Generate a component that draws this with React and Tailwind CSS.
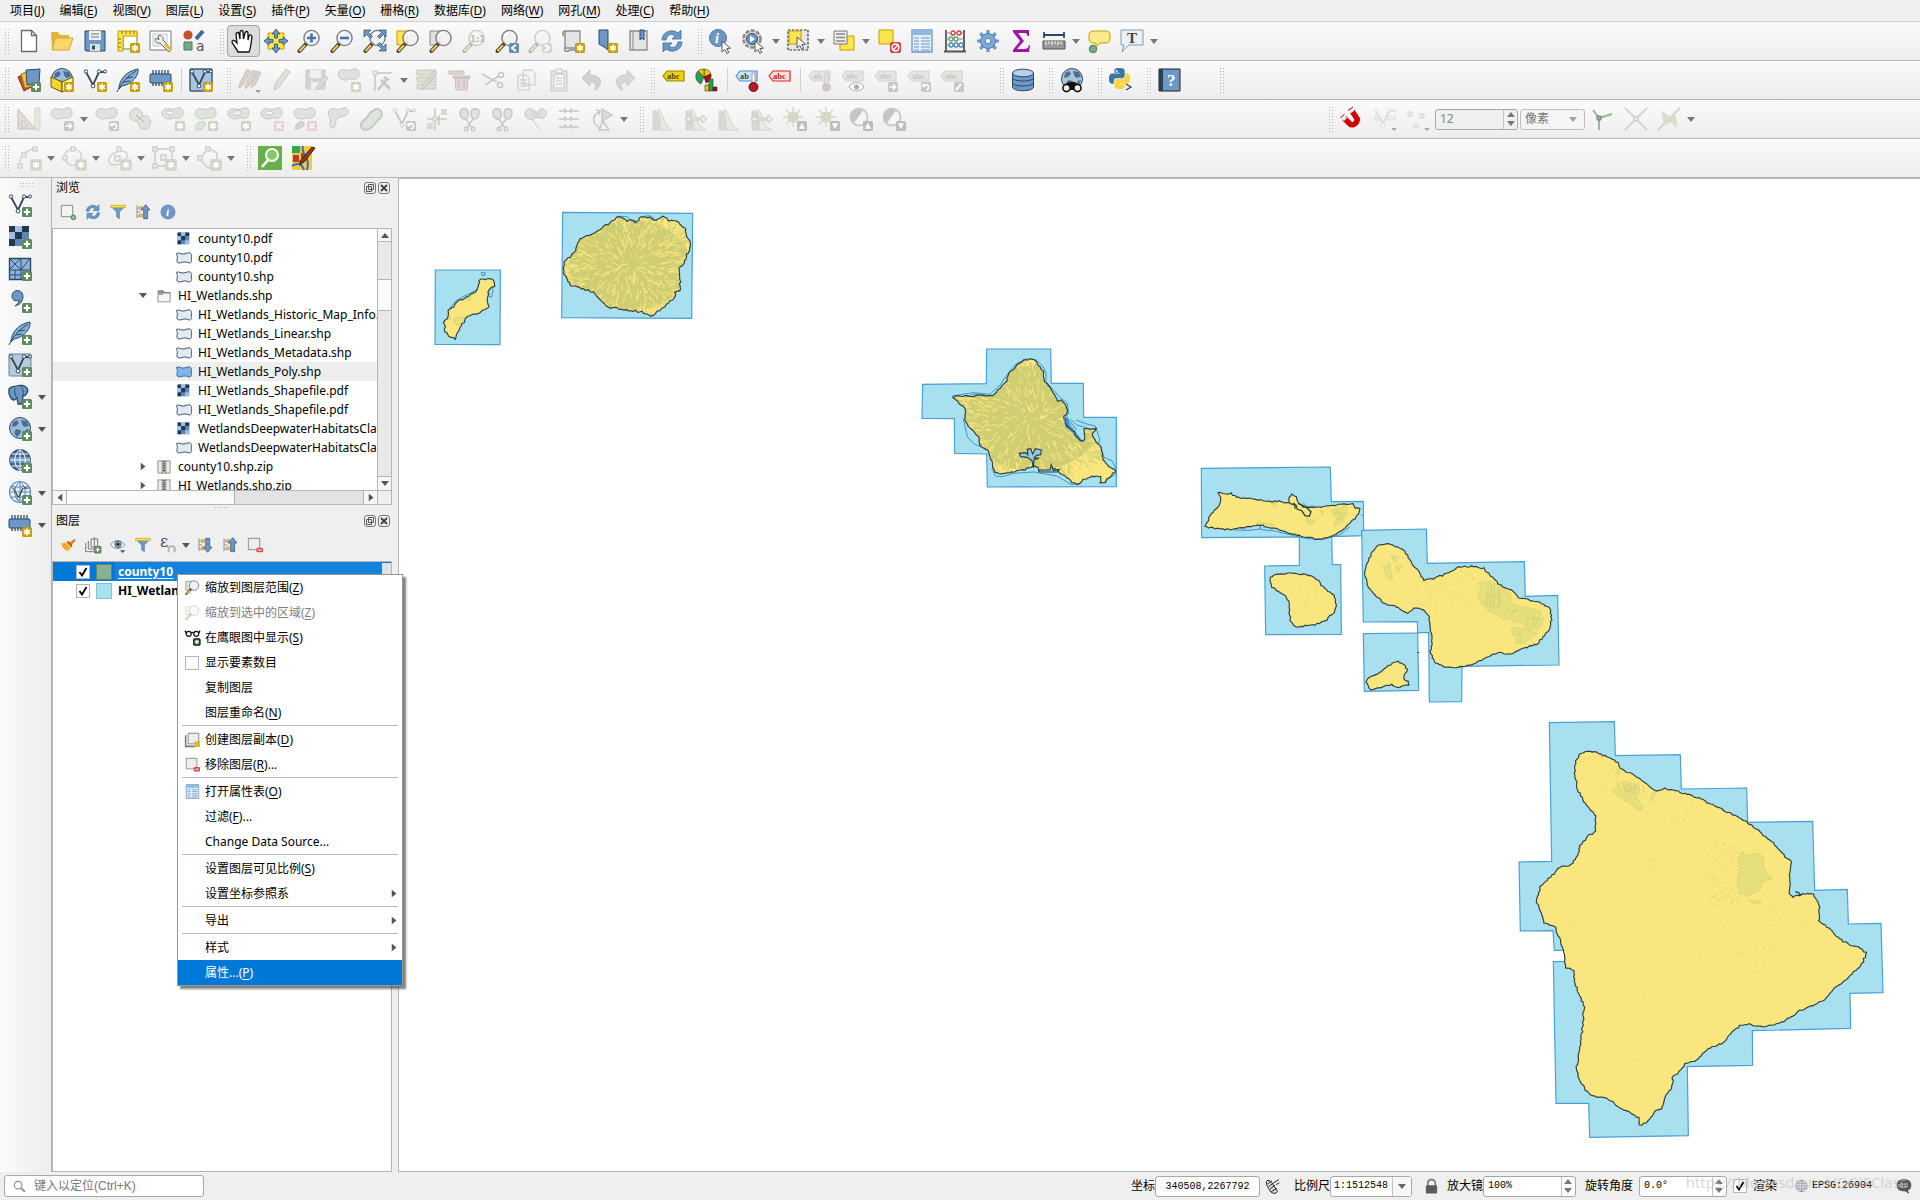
import React, { useState } from "react";

// ===== Icon parts =====
const B = "#6d97c4";
const D = "#2b4a6b";
const Y = "#ffe54c";
const G = "#d3d5d2";
const GD = "#c6c8c5";

const Badge = ({ c = "#c4a000", children }) => (
  <g>
    <rect x="14" y="14" width="10" height="10" rx="1.5" fill={c} />
    <g stroke="#fff" strokeWidth="1.6" fill="none">{children}</g>
  </g>
);
const Star = ({ c }) => <Badge c={c}><path d="M19 15.4v7.2M15.9 17.2l6.2 3.6M22.1 17.2l-6.2 3.6" /></Badge>;
const Plus = () => <Badge c="#5a8c5a"><path strokeWidth="2" d="M19 15.8v6.4M15.8 19h6.4" /></Badge>;
const GStar = () => <Star c="#d0d0c2" />;
const GCross = () => <Badge c="#e3d3d6"><path d="M16.5 16.5l5 5M21.5 16.5l-5 5" /></Badge>;
const GArrow = () => <Badge c="#c6c8c4"><path d="M15.5 19h6M19 16.3l2.7 2.7-2.7 2.7" /></Badge>;
const GTurn = () => <Badge c="#c6c8c4"><path d="M17 17.5a2.6 2.6 0 1 1 2 4.3M16 16v2.4h2.4" /></Badge>;
const GUp = () => <Badge c="#bcc0ba"><path fill="#fff" strokeWidth="0" d="M19 15.8l3 6h-6z" /></Badge>;
const GDown = () => <Badge c="#bcc0ba"><path fill="#fff" strokeWidth="0" d="M19 22.2l3-6h-6z" /></Badge>;

const Lens = ({ soft }) => (
  <g opacity={soft ? 0.35 : 1}>
    <path d="M9.5 14.5L2.5 22" stroke="#333" strokeWidth="4" strokeLinecap="round" />
    <path d="M7.5 16.7L3 21.5" stroke="#f5c84a" strokeWidth="2.2" strokeLinecap="round" />
    <circle cx="14.5" cy="9" r="7.6" fill="#eef0ee" fillOpacity="0.85" stroke="#7b7d79" strokeWidth="1.4" />
    <path d="M9.8 8a5 5 0 0 1 4.5-4.3" stroke="#fff" strokeWidth="1.6" fill="none" />
  </g>
);
const Blob = ({ fill = "#dfe3de", stroke = GD }) => (
  <path d="M1 6c0-4 5-5 8-4s5 0 8-1 6 2 5 6-4 5-7 4-3 1-6 1-8-1-8-6z" fill={fill} stroke={stroke} />
);
const Cursor = () => <path d="M13 12v11l2.8-2.6 2 4 2-1-2-3.8 3.6-.4z" fill="#fff" stroke="#555" strokeWidth="1" />;
const Vee = ({ c = "#34495e" }) => (
  <g stroke={c} fill="none">
    <path d="M3 4l7 13 6-13h5" strokeWidth="1.8" />
    <g fill="#fff" strokeWidth="1"><circle cx="3" cy="3.5" r="1.7" /><circle cx="10" cy="18" r="1.9" /><circle cx="16" cy="3.5" r="1.7" /><circle cx="22" cy="3.5" r="1.5" /></g>
  </g>
);
const Feather = () => (
  <g>
    <path d="M3 21C3 12 10 3 22 1c1 6-5 15-16 17z" fill="#86add6" stroke={D} />
    <path d="M1 24C5 15 12 8 20 3M7 14l7-1M10 10l7-1" stroke={D} fill="none" />
  </g>
);
const Chip = () => (
  <g>
    <path d="M4 2v16M7 2v16M10 2v16M13 2v16M16 2v16M19 2v16" stroke={D} strokeWidth="1.3" />
    <rect x="1" y="6" width="21" height="9" rx="1" fill={B} stroke={D} />
  </g>
);
const Globe = ({ fill = "#9dbde0", line = D }) => (
  <g>
    <circle cx="12" cy="11" r="10.5" fill={fill} stroke={line} />
    <path d="M5 5l4-2 2 3-3 3-4 1zM13 3l6 1 2 5-5 1-2-3zM8 12l5 1-1 4-3 3-3-4zM17 13l4-1-2 5z" fill={line} opacity="0.7" />
  </g>
);
const Grid = ({ c = D }) => (
  <g>
    <circle cx="12" cy="11" r="10.5" fill="#e9f0f8" stroke={c} strokeWidth="1.2" />
    <path d="M1.5 11h21M3 6h18M3 16h18M12 .5v21M12 .5c-7 6-7 15 0 21M12 .5c7 6 7 15 0 21" stroke={c} fill="none" />
  </g>
);
const Label = ({ c = "#edd400", s = "#9c8500", t = "#444", text = "abc" }) => (
  <g>
    <path d="M1 8l4-5h17v10H5z" fill={c} stroke={s} strokeWidth="1.2" />
    <text x="5" y="11" fontSize="8.5" fontWeight="bold" fontFamily="Liberation Serif" fill={t}>{text}</text>
  </g>
);
const Hist = () => (
  <g>
    <path d="M2 23V4h3c3 2 4 9 5 13l3 6z" fill="#d5dbd2" stroke={G} />
    <path d="M7 2c4 2 5 8 7 14l4 5 4 2H9z" fill="#ebe7e4" stroke={G} />
    <path d="M9 22V10" stroke="#e6cfcf" />
  </g>
);
const Sheet = () => <path d="M4 2h15v17H4zM4 2C1 2 1 7 4 7M4 19c-2 4 3 4 5 2h10v-2" fill="#e4e4e4" stroke="#8a8a8a" strokeWidth="1.3" />;
const Scissors = () => (
  <g stroke={GD} fill="none" strokeWidth="1.4">
    <path d="M8 12l6 9M15 12l-6 9" /><circle cx="8" cy="22" r="1.8" /><circle cx="15" cy="22" r="1.8" />
    <path d="M2 6c0-5 7-6 8-1s-1 8-4 7-4-3-4-6zM13 6c0-5 8-6 8-1s-1 7-4 7-4-3-4-6z" fill="#dfe3de" />
  </g>
);
const ArrowsUp = ({ down }) => (
  <g>
    <path d="M3 2v19M3 6h5M3 12h5M3 18h5" stroke="#8c8c8c" strokeWidth="1.4" />
    <path d="M7 4h4v4H7zM7 15h4v4H7z" fill="#f6c344" stroke="#d48a1c" />
    <path transform={down ? "rotate(180 16 12)" : ""} d="M16 1l6.5 8H19v13h-6V9H9.5z" fill={B} stroke={D} />
  </g>
);
const Sync = () => (
  <g fill={B} stroke="#3d6ea5" strokeWidth="0.8">
    <path d="M2 11C2 3 12-1 18 4l3-3v9h-9l3-3c-4-3-8-1-9 4z" />
    <path d="M22 13c0 8-10 12-16 7l-3 3v-9h9l-3 3c4 3 8 1 9-4z" />
  </g>
);
const Checker = () => (
  <g>
    <path d="M1 1h20v20H1z" fill="#5d87b8" />
    <path d="M1 1h6v6H1zM7 7h7v7H7zM1 14h6v7H1zM14 1h7v6h-7z" fill="#23364f" />
    <path d="M7 1h7v6H7zM14 14h7v7h-7zM1 7h6v7H1z" fill="#9fc0e4" />
  </g>
);
const Funnel = () => <g><path d="M1 3h22l-9 9v10l-4-3v-7z" fill={B} stroke="#4d76a5" /><path d="M1 2h22v3.5H1z" fill={Y} stroke="#c4a000" strokeWidth="0.8" /></g>;
const Table = () => (
  <g>
    <path d="M2 1h20v22H2z" fill="#e4eff9" stroke={B} strokeWidth="1.3" /><path d="M2 1h20v5H2z" fill="#90b8e0" />
    <path d="M4 9h5M4 12h5M4 15h5M4 18h5M4 21h5M11 9h9M11 12h9M11 15h9M11 18h9M11 21h9" stroke={B} strokeWidth="1.2" />
  </g>
);
const pythonHalf =
  "M14.25.18l.9.2.73.26.59.3.45.32.34.34.25.34.16.33.1.3.04.26.02.2-.01.13V8.5l-.05.63-.13.55-.21.46-.26.38-.3.31-.33.25-.35.19-.35.14-.33.1-.3.07-.26.04-.21.02H8.77l-.69.05-.59.14-.5.22-.41.27-.33.32-.27.35-.2.36-.15.37-.1.35-.07.32-.04.27-.02.21v3.06H3.17l-.21-.03-.28-.07-.32-.12-.35-.18-.36-.26-.36-.36-.35-.46-.32-.59-.28-.73-.21-.88-.14-1.05-.05-1.23.06-1.22.16-1.04.24-.87.32-.71.36-.57.4-.44.42-.33.42-.24.4-.16.36-.1.32-.05.24-.01h.16l.06.01h8.16v-.83H6.18l-.01-2.75-.02-.37.05-.34.11-.31.17-.28.25-.26.31-.23.38-.2.44-.18.51-.15.58-.12.64-.1.71-.06.77-.04.84-.02 1.27.05z";

const VECTOR = "M1 5c3-2 7 2 11 1s8-3 10-1 1 4 1 7 1 5-1 7-6-2-10-1-7 2-9 1-2-4-1-7-2-5-1-7z";

// ===== Icons, all on a 24x24 grid =====
const icons = {
  newFile: <path d="M4.5 1.5h10l5 5v16h-15zM14.5 1.5v5h5" fill="#fff" stroke="#6b6b6b" strokeWidth="1.3" />,
  open: <g><path d="M1 3h7l2 3h9v15H2z" fill="#e3b533" /><path d="M5 9h18l-4 12H2z" fill="#fdd76c" stroke="#d6a728" /></g>,
  save: <g><path d="M2 2h20v20H3l-1-1z" fill={B} stroke={D} /><path d="M6 2h12v9H6z" fill="#eee" /><path d="M8 5h8M8 8h8" stroke="#777" /><path d="M7 15h10v7H7z" fill="#dfe5ec" /><path d="M9 16.5h3v4H9z" fill={D} /></g>,
  layout: <g><path d="M7 3h14v17H7z" fill="#fff" stroke="#777" /><path d="M2 2h19v5H7v15H2z" fill={Y} stroke="#c4a000" /><path d="M6 2v3M10 2v3M14 2v3M18 2v3M2 10h3M2 14h3M2 18h3" stroke="#8a7300" /><Star /></g>,
  tool: <g><path d="M1 2h21v19H1z" fill="#fff" stroke="#777" /><path d="M4 5h14v12H4z" fill="#eef3f8" stroke="#c3ccd6" /><path d="M9 7c3-2 6 2 5 4l8 9-2 3-9-9c-4 1-6-3-4-5l3 2z" fill="#f0f0f0" stroke="#666" /><path d="M16 15l6 6" stroke="#e7bb3a" strokeWidth="3" /></g>,
  style: <g><circle cx="6" cy="6" r="4.6" fill="#c5502d" /><path d="M14 10l7-8" stroke="#3d6c9c" strokeWidth="4" /><path d="M2 13h8v8H2z" fill="#76a888" stroke="#4c7b5d" /><text x="14" y="22" fontSize="14" fontFamily="DejaVu Sans" fill="#555">a</text></g>,
  hand: <path d="M7 23c-1-3-5-7-6-10 0-2 2-2 3-1l2 2-1-9c0-2 3-2 3 0l1 5V3c0-2 3-2 3 0l.5 7L14 4c0-2 3-2 3 0v7l1-4c1-2 3-1 3 1-1 5-1 11-3 15z" fill="#fff" stroke="#111" strokeWidth="1.3" />,
  pan: <g><path d="M4 4h16v16H4z" fill={Y} stroke="#c4a000" /><path d="M12 0l4 5h-2.5v4h-3V5H8zM12 24l4-5h-2.5v-4h-3v4H8zM0 12l5-4v2.5h4v3H5V16zM24 12l-5-4v2.5h-4v3h4V16z" fill={B} stroke={D} strokeWidth="0.8" /></g>,
  zoomIn: <g><Lens /><path d="M14.5 4.5v9M10 9h9" stroke="#3f75b5" strokeWidth="2.6" /></g>,
  zoomOut: <g><Lens /><path d="M10 9h9" stroke="#3f75b5" strokeWidth="2.6" /></g>,
  zoomFull: <g><Lens /><path d="M1 1h7L5.5 3.5l4 4-2 2-4-4L1 8zM23 1h-7l2.5 2.5-4 4 2 2 4-4L23 8zM23 22h-7l2.5-2.5-4-4 2-2 4 4L23 15z" fill={B} stroke={D} strokeWidth="0.7" /></g>,
  zoomSel: <g><path d="M1 2h10v14H1z" fill={Y} stroke="#c4a000" /><Lens /></g>,
  zoomLayer: <g><path d="M1 2h10v14H1z" fill="#e0e0e0" stroke="#8a8a8a" /><Lens /></g>,
  zoomLayerOff: <g opacity="0.35"><path d="M1 2h10v14H1z" fill="#e0e0e0" stroke="#8a8a8a" /><Lens /></g>,
  zoomNative: <g><Lens soft /><text x="8" y="12.5" fontSize="8.5" fontWeight="bold" fontFamily="DejaVu Sans" fill="#bbb">1:1</text></g>,
  zoomLast: <g><Lens /><Badge c="#5f8cbd"><path strokeWidth="2" d="M21 15.8L17 19l4 3.2" /></Badge></g>,
  zoomNext: <g><Lens soft /><Badge c="#d3d7db"><path strokeWidth="2" d="M17 15.8l4 3.2-4 3.2" /></Badge></g>,
  newMap: <g><Sheet /><Star /></g>,
  bookmarkNew: <g><path d="M5 1h9v20l-4-3-5-3z" fill={B} stroke={D} /><Star /></g>,
  bookmarks: <g><path d="M3 2h17v19H3z" fill="#e4e4e4" stroke="#8a8a8a" strokeWidth="1.3" /><path d="M6 2v19" stroke="#8a8a8a" /><path d="M13 1h4v10l-2-2-2 2z" fill={B} stroke={D} /></g>,
  refresh: <Sync />,
  identify: <g><circle cx="9" cy="9" r="8.5" fill={B} stroke="#4a77aa" /><text x="6" y="14" fontSize="14" fontStyle="italic" fontWeight="bold" fontFamily="Liberation Serif" fill="#fff">i</text><Cursor /></g>,
  action: <g><circle cx="10" cy="10" r="8.5" fill="#ddd" stroke="#888" strokeWidth="2.5" strokeDasharray="4 1.5" /><circle cx="10" cy="10" r="5.5" fill={B} stroke={D} /><path d="M8 6.5l5 3.5-5 3.5z" fill="#fff" /><Cursor /></g>,
  select: <g><path d="M1 1h20v20H1z" fill="#e6e6e6" stroke="#333" strokeDasharray="2.5 1.5" strokeWidth="1.2" /><path d="M2 2h12v13H2z" fill={Y} stroke="#c4a000" /><path transform="translate(-3 -4)" d="M13 12v11l2.8-2.6 2 4 2-1-2-3.8 3.6-.4z" fill="#fff" stroke="#555" /></g>,
  selectForm: <g><path d="M8 7h14v14H8z" fill={Y} stroke="#c4a000" /><path d="M2 2h13v13H2z" fill="#eee" stroke="#777" /><path d="M4 5h9M4 8.5h9M4 12h9" stroke="#888" strokeWidth="1.5" /></g>,
  deselect: <g><path d="M2 1h14v14H2z" fill={Y} stroke="#c4a000" /><rect x="13" y="13" width="11" height="11" rx="2" fill="#d6424a" /><circle cx="18.5" cy="18.5" r="3.5" fill="none" stroke="#fff" strokeWidth="1.4" /><path d="M16 21l5-5" stroke="#fff" strokeWidth="1.4" /></g>,
  table: <Table />,
  calc: <g><path d="M3 1v21M21 1v21M1 22.5h22" stroke="#555" strokeWidth="1.8" /><path d="M3 4h18M3 10h18M3 16h18" stroke="#888" /><g fill="#fff" strokeWidth="1.3"><g stroke="#d43b3b"><circle cx="10" cy="4" r="2" /><circle cx="16" cy="4" r="2" /></g><g stroke="#59a869"><circle cx="8" cy="10" r="2" /><circle cx="13" cy="10" r="2" /></g><g stroke="#4a86b8"><circle cx="8" cy="16" r="2" /><circle cx="13" cy="16" r="2" /><circle cx="18" cy="16" r="2" /></g></g></g>,
  gear: <g><path d="M12 1v22M1 12h22M4.2 4.2l15.6 15.6M19.8 4.2L4.2 19.8" stroke={B} strokeWidth="3.2" /><circle cx="12" cy="12" r="7.5" fill="#7fa8d6" stroke="#4f7fb5" /><circle cx="12" cy="12" r="2.8" fill="#f4f4f4" stroke="#4f7fb5" /></g>,
  sigma: <path d="M4 1h16v6h-1.5c-.5-2.5-1.5-3-4-3H9l6 8-7 8h7c3 0 4-1 5-4h1l-1 7H4v-2l7-9-7-9z" fill="#a3149f" />,
  measure: <g><path d="M2 6h20M2 3v6M22 3v6" stroke={D} strokeWidth="1.8" /><path d="M1 12h22v8H1z" fill="#999" stroke="#555" /><path d="M4 12v4M7 12v3M10 12v4M13 12v3M16 12v4M19 12v3" stroke="#fff" /></g>,
  tips: <g><circle cx="6" cy="20" r="3.8" fill="#76a888" stroke="#4c7b5d" /><path d="M6 2h13c3 0 4 2 4 4v4c0 3-2 4-4 4h-6l-4 4v-4H6c-3 0-4-2-4-4V6c0-2 1-4 4-4z" fill="#fbe98a" stroke="#c4a000" /></g>,
  annot: <g><path d="M1 1h22v15H9l-7 7 2-7H1z" fill="#eaf0f4" stroke="#8b9aa6" /><text x="7" y="14" fontSize="15" fontWeight="bold" fontFamily="Liberation Serif" fill="#444">T</text></g>,

  dataSource: <g><path d="M1 9l10-5 5 14-9 5z" fill="#c9492e" stroke="#8a2f1c" /><path d="M4 6l11-4 3 15-10 3z" fill="#f2c431" stroke="#a88313" /><path d="M9 2l14-1-1 14-12 2z" fill={B} stroke={D} /><Plus /></g>,
  geopackage: <g><Globe /><path d="M1 9l11 5v10L1 19z" fill="#f2d330" stroke="#6e5a00" /><path d="M12 14l11-5v10l-11 5z" fill="#fff07a" stroke="#6e5a00" /><Star /></g>,
  newShape: <g><Vee /><Star /></g>,
  newSpatialite: <g><Feather /><Star /></g>,
  newMemory: <g><Chip /><Star /></g>,
  newVirtual: <g><rect x="1" y="1" width="22" height="22" rx="1" fill="#a9c4df" stroke="#415a75" strokeWidth="1.5" /><Vee /><Star /></g>,
  pencils: <g fill="#d9d0cc" stroke={GD}><path d="M1 20l1-5L9 1l4 2-8 14zM7 21l1-5 7-14 4 2-8 14z" /><path d="M13 20l1-5 5-12 4 2-6 12z" /><path d="M17 22h6l-3 3z" fill="#999" stroke="none" /></g>,
  pencil: <path d="M3 22l1-6L15 1l4 3L8 19z" fill="#e4e0d3" stroke={GD} />,
  saveEdits: <g><path d="M2 2h19v19H2z" fill="#d5d5d8" stroke={GD} /><path d="M6 2h11v8H6zM7 14h9v7H7z" fill="#f0f0f0" /><path d="M12 22l1-4 8-10 3 2-8 10z" fill="#e6d9d2" stroke={GD} /></g>,
  addPoly: <g><Blob /><GStar /></g>,
  vertex: <g stroke={GD} fill="none"><path d="M5 5v18M5 5h17" strokeWidth="1.5" /><path d="M3 3h4v4H3z" fill="#eee" /><path d="M8 22l9-11M11 12l9 9M14 9l5 3" strokeWidth="2.5" /></g>,
  attrs: <g><path d="M2 2h19v5H2zM2 9h19v5H2zM2 16h19v5H2z" fill="#e1e0cd" stroke={GD} /><path d="M6 22l2-5L19 3l3 2-11 14z" fill="#ded6d2" stroke={GD} /></g>,
  trash: <g fill="#e2d5d5" stroke="#cbbcbc"><path d="M1 3h15v3H1zM5 8h17v2H5zM7 10h13l-1 12H8z" /><path d="M11 12v8M16 12v8" /></g>,
  cut: <g stroke={GD} fill="none" strokeWidth="1.5"><path d="M1 6l15 8M4 17L18 8" /><circle cx="20" cy="7" r="2.5" /><circle cx="19" cy="17" r="2.5" /></g>,
  copy: <g fill="#f3f3f3" stroke={GD}><path d="M9 2h9l3 3v12H9zM4 7h8l3 3v12H4z" /><path d="M6 12h7M6 15h7M6 18h7" /></g>,
  paste: <g fill="#e6e6e6" stroke={GD}><path d="M4 3h16v20H4z" /><path d="M7 6h10v14H7zM9 1h6v4H9z" fill="#f5f5f5" /><path d="M9 10h6M9 13h6M9 16h6" /></g>,
  undo: <path d="M2 10l8-8v5c8 0 12 4 10 9-1 4-4 6-6 6 3-4 3-8-4-8v4z" fill="#d9cfca" stroke={GD} />,
  redo: <path d="M22 10l-8-8v5C6 7 2 11 4 16c1 4 4 6 6 6-3-4-3-8 4-8v4z" fill="#d5dad2" stroke={GD} />,
  label: <Label />,
  diagram: <g stroke="#333" strokeWidth="0.6"><path d="M9 9V1A8 8 0 0 1 16 6z" fill="#f3c400" /><path d="M9 9L3 3a8 8 0 0 0 3 13z" fill="#1ea54a" /><path d="M9 9L3 3a8 8 0 0 1 6-2z" fill="#f3c400" /><path d="M9 9l7-3a8 8 0 0 1-5 9z" fill="#b40000" /><path d="M10 17h4v6h-4z" fill="#f3c400" /><path d="M14 11h4v12h-4z" fill="#1ea54a" /><path d="M18 19h4v4h-4z" fill="#b40000" /></g>,
  labelPin: <g><Label c="#cfe2f8" s="#4a90e2" text="ab" /><path d="M17 5h3v11h-3z" fill="#fff" stroke="#999" /><circle cx="18.5" cy="19" r="4.5" fill="#b01c24" stroke="#6d0d12" /></g>,
  labelRed: <Label c="#ffdede" s="#f02020" t="#c01818" />,
  gl1: <g><Label c="#e5e5df" s={G} t="#c5c5c5" text="ab" /><circle cx="18.5" cy="19" r="4.5" fill="#d3c5c7" /><path d="M17 5h3v11h-3z" fill="#eee" stroke={GD} /></g>,
  gl2: <g><Label c="#e5e5df" s={G} t="#c5c5c5" /><path d="M8 19c4-6 11-6 15 0-4 5-11 5-15 0z" fill="#fff" stroke="#aaa" /><circle cx="15.5" cy="19" r="2.5" fill="#aaa" /></g>,
  gl3: <g><Label c="#e5e5df" s={G} t="#c5c5c5" /><GArrow /></g>,
  gl4: <g><Label c="#e5e5df" s={G} t="#c5c5c5" /><GTurn /></g>,
  gl5: <g><Label c="#e5e5df" s={G} t="#c5c5c5" /><Badge c="#c6c8c4"><path d="M16 22l5-6" strokeWidth="2" /></Badge></g>,
  db: <g stroke={D} fill={B}><path d="M1.5 5v14c0 5 21 5 21 0V5z" /><ellipse cx="12" cy="5" rx="10.5" ry="3.8" fill="#b9d0e8" /><path d="M1.5 10c0 4 21 4 21 0M1.5 15c0 4 21 4 21 0" fill="none" /></g>,
  metasearch: <g><Globe fill="#aac4de" /><path d="M4 22c0-4 3-8 6-8h4c3 0 6 4 6 8z" fill="#111" /><circle cx="6.5" cy="20" r="3.6" fill="#eee" stroke="#111" strokeWidth="1.6" /><circle cx="17.5" cy="20" r="3.6" fill="#eee" stroke="#111" strokeWidth="1.6" /></g>,
  python: <g><g transform="scale(.88)"><path d={pythonHalf} fill="#3a77a8" /><path d={pythonHalf} transform="rotate(180 12 12)" fill="#ffd445" /><circle cx="8.7" cy="3.4" r="1.1" fill="#fff" /></g><path d="M17 16l5 3-5 3" fill="none" stroke="#444" strokeWidth="1.3" /></g>,
  help: <g><path d="M1 1h21v22H1z" fill={B} stroke="#222" /><path d="M1 1h4v22H1z" fill="#2c3e50" /><text x="9" y="18" fontSize="17" fontFamily="Liberation Serif" fontWeight="bold" fill="#fff">?</text></g>,

  cad: <g><path d="M1 2l17 20H1zM5 13l5 6H5z" fill="#e3dada" fillRule="evenodd" stroke="#c9bfbf" /><path d="M18 1h5v22h-5z" fill="#e9e7da" stroke={G} /></g>,
  move: <g><Blob /><GArrow /></g>,
  rotate: <g><Blob /><GTurn /></g>,
  simplify: <g fill="#dfe3de" stroke={GD}><circle cx="8" cy="8" r="6.5" /><path d="M9 14l5-5h6l3 6-3 7h-7z" /><path d="M8 8l8 7" fill="none" stroke="#aaa" /></g>,
  addRing: <g><Blob /><ellipse cx="9" cy="6" rx="4" ry="2" fill="#f5f5f5" stroke={GD} /><GStar /></g>,
  addPart: <g><Blob /><path d="M2 20c0-5 8-7 9-4s-2 7-9 7z" fill="#dfe3de" stroke={GD} /><GStar /></g>,
  fillRing: <g><Blob /><ellipse cx="10" cy="6" rx="5" ry="2.5" fill="#e8ebe7" stroke={GD} /><GStar /></g>,
  delRing: <g><Blob /><ellipse cx="9" cy="6" rx="4" ry="2" fill="#f5f5f5" stroke={GD} /><GCross /></g>,
  delPart: <g><Blob /><path d="M2 22c1-6 5-9 8-7s0 7-8 7z" fill="#d3d5d2" stroke={GD} /><GCross /></g>,
  reshape: <path d="M2 6c0-4 5-5 8-4s5 0 8-1 5 2 4 5-4 3-8 4-4 4-5 8-5 4-5 0 1-6-2-12z" fill="#dfe3de" stroke={GD} />,
  offset: <path d="M2 18c0-5 5-5 7-9s8-9 12-6 1 8-2 10-4 7-9 9-8 0-8-4z" fill="#dfe3de" stroke={GD} strokeWidth="2" />,
  offsetCurve: <g><Vee c={GD} /><GTurn /></g>,
  splitFeat: <g stroke={GD} fill="none"><path d="M10 1v22M2 12h20M14 8v10" strokeWidth="1.4" /><path d="M8 10h4v4H8z" fill="#eee" /><path d="M16 2h6v6h-6z" fill="#d9d9c8" stroke="none" /><path d="M2 16h6v6H2z" fill="#e3d3d6" stroke="none" /></g>,
  scissors: <Scissors />,
  merge: <g stroke={GD} fill="#dfe3de"><path d="M1 7c0-6 8-7 10-2s3-5 8-3 4 8 0 9-6-2-8 0-10 2-10-4z" /><path d="M9 4v6M12 4v6M15 4v6M8 12l8 11" fill="none" /></g>,
  align: <path d="M2 4h20M2 12h20M2 20h20M8 1v5M14 1v5M8 9v5M14 9v5M8 17v5M14 17v5" stroke={GD} strokeWidth="1.5" />,
  rotPoint: <g fill="none" stroke={GD} strokeWidth="1.4"><path d="M9 20C2 17 2 8 9 5M6 3l4 1-1 4" /><path d="M12 2l10 6-10 6z" fill="#d9ddd8" /><path d="M13 14l6 9H9z" /></g>,
  hist: <Hist />,
  histArrow: <g><Hist /><path d="M1 12l5-4v3h12V8l5 4-5 4v-3H6v3z" fill="#eee" stroke={GD} /></g>,
  sunUp: <g><path d="M10 0v20M0 10h20M3 3l14 14M17 3L3 17" stroke="#dcdccf" strokeWidth="1.8" /><circle cx="10" cy="10" r="5.5" fill="#d7d7c6" /><GUp /></g>,
  sunDown: <g><path d="M10 0v20M0 10h20M3 3l14 14M17 3L3 17" stroke="#dcdccf" strokeWidth="1.8" /><circle cx="10" cy="10" r="5.5" fill="#d7d7c6" /><GDown /></g>,
  conUp: <g><circle cx="10" cy="10" r="8.5" fill="#f5f5f5" stroke="#ccc" strokeWidth="2" /><path d="M14 3.5A7.5 7.5 0 0 0 5 16z" fill="#c5c5c5" /><GUp /></g>,
  conDown: <g><circle cx="10" cy="10" r="8.5" fill="#f5f5f5" stroke="#ccc" strokeWidth="2" /><path d="M14 3.5A7.5 7.5 0 0 0 5 16z" fill="#c5c5c5" /><GDown /></g>,
  magnet: <g fill="none"><path d="M4 11l6 6c3 3 10-3 6-7l-4-6" stroke="#cf0000" strokeWidth="5.5" /><path d="M2 10l4 4M10 3l4 4" stroke="#cf0000" strokeWidth="0" /><path d="M2.5 9.5l3 3M10.500 2l2 3" stroke="#f7eaea" strokeWidth="4.5" /><path d="M.5 11l4-4M8 3.500L13 0" stroke="#8a0a0a" /></g>,
  snapV: <g><Vee c="#dcdedc" /><path d="M2 9h4v4H2zM14 9h8v4h-8z" fill="#eee" stroke="#dcdedc" /><path d="M18 21h6l-3 3z" fill="#aaa" /></g>,
  snapPts: <g fill="#eceeec" stroke={G}><path d="M2 5h4v4H2zM14 7h4v4h-4zM8 17h4v4H8z" /><path d="M18 21h6l-3 3z" fill="#aaa" stroke="none" /></g>,
  topo: <g><path d="M2 3l6 8 13-4M8 11v12" stroke="#8cc08f" strokeWidth="2" fill="none" /><path d="M6 9h4v4H6z" fill="#aaa" stroke="#777" /></g>,
  inter: <g stroke={G} fill="#eee" strokeWidth="1.8"><path d="M1 1l22 22M23 1L1 23" /><path d="M10 10h4v4h-4z" /></g>,
  selfSnap: <g><path d="M1 23L23 1" stroke={G} strokeWidth="2" /><path d="M4 4l8 5 7-1 1 13-6-6-7 3z" fill="#dddbcb" /></g>,

  arc: <g fill="none" stroke={G} strokeWidth="1.6"><path d="M2 20C3 9 8 4 18 3" /><path d="M1 18h4v4H1zM16 1h4v4h-4zM5 7h4v4H5z" fill="#f0f0f0" /><GStar /></g>,
  circ: <g fill="none" stroke={G} strokeWidth="1.6"><circle cx="11" cy="11" r="8.5" /><path d="M9 1h4v4H9zM1 10h4v4H1z" fill="#f0f0f0" /><GStar /></g>,
  ellip: <g fill="none" stroke={G} strokeWidth="1.6"><ellipse cx="11" cy="12" rx="10" ry="6" transform="rotate(-25 11 12)" /><path d="M8 10h5v5H8zM10 1h4v4h-4z" fill="#f0f0f0" /><GStar /></g>,
  rect: <g fill="none" stroke={G} strokeWidth="1.8"><path d="M3 3h17v17H3z" /><path d="M1 1h4v4H1zM18 1h4v4h-4zM1 18h4v4H1zM9 9h5v5H9z" fill="#f0f0f0" /><GStar /></g>,
  poly: <g fill="none" stroke={G} strokeWidth="1.8"><path d="M11 2l9 5v10l-9 5-8-9z" /><path d="M9 1h4v4H9zM1 10h4v4H1z" fill="#f0f0f0" /><GStar /></g>,
  osmSearch: <g><path d="M0 0h24v24H0z" fill="#68b04a" /><circle cx="14" cy="9" r="6" fill="#86c96a" stroke="#fff" strokeWidth="2" /><path d="M10 14l-6 7" stroke="#fff" strokeWidth="2.5" /></g>,
  osmEdit: <g><path d="M1 0h20v24H1z" fill="#f6ca3c" /><path d="M1 0h8v7H1z" fill="#2fa84f" /><path d="M2 9h6v7H2zM10 7h4v6h-4z" fill="#b93d2c" /><path d="M12 0c-3 8 8 10 4 24M1 20c6-4 10-2 12 4" stroke="#2d6fd2" strokeWidth="2" fill="none" /><path d="M9 15L21 1l3 1-10 13-5 4z" fill="#8f3b14" stroke="#4a1c07" /></g>,

  addVector: <g><Vee /><Plus /></g>,
  addRaster: <g><Checker /><Plus /></g>,
  addMesh: <g><path d="M1.5 1.5h21v21h-21z" fill="#8fb2d9" stroke={D} strokeWidth="1.4" /><path d="M1 13h22M13 1v22M1 1l12 12M13 1L1 13M22 1l-9 12M7 13v10M1 18h12" stroke={D} /><Plus /></g>,
  addCsv: <g><path d="M4 7c0-7 11-8 11 1-1 6-4 8-8 9 2-2 4-3 4-6-4 2-7 0-7-4z" fill={B} stroke={D} /><Plus /></g>,
  addSpatialite: <g><Feather /><Plus /></g>,
  addVirtual: <g><rect x="1" y="1" width="22" height="22" rx="1" fill="#b5c9dc" stroke="#6b8299" /><Vee /><Plus /></g>,
  addPostgis: <g><path d="M1 4c3-4 6-2 8-3s8-1 10 2-1 8-4 8l-1 8h-4l-1-6-3 2C3 15 0 9 1 4z" fill={B} stroke={D} strokeWidth="1.3" /><path d="M7 3c-1 4 0 7 2 10M13 2c3 4 3 7 1 9" fill="none" stroke={D} /><Plus /></g>,
  addWms: <g><Globe /><Plus /></g>,
  addWcs: <g><circle cx="12" cy="11" r="10.5" fill="#3d668f" stroke={D} /><path d="M2 8h20v6H2z" fill={B} /><path d="M1.5 11h21M4 5h16M4 17h16M12 .5v21M12 .5c-7 6-7 15 0 21M12 .5c7 6 7 15 0 21" stroke="#fff" fill="none" /><Plus /></g>,
  addWfs: <g><Grid c="#5f8dbd" /><g transform="translate(3 4) scale(.75)"><Vee /></g><Plus /></g>,

  addBox: <g><path d="M2 2h17v17H2z" fill="#f4f4f4" stroke="#888" strokeWidth="1.4" /><circle cx="20" cy="20" r="3.5" fill="#8fc48f" stroke="#4c7b5d" strokeWidth="1.5" /></g>,
  filter: <Funnel />,
  collapse: <ArrowsUp />,
  expand: <ArrowsUp down />,
  info: <g><circle cx="12" cy="12" r="10.5" fill={B} stroke="#4a77aa" /><text x="9" y="18" fontSize="17" fontStyle="italic" fontWeight="bold" fontFamily="Liberation Serif" fill="#fff">i</text></g>,
  brush: <g><path d="M14 9l7-6 3 2-7 7z" fill="#c98042" /><path d="M1 9c4 0 8-1 12-2l5 6c-1 4-4 7-7 8-4-2-8-7-10-12z" fill="#f0c23c" /><path d="M13 6l6 7-2 2-7-8z" fill="#d4492f" /><path d="M3 12l7 8M6 10l7 8" stroke="#dd7a35" strokeWidth="1.5" /></g>,
  group: <g fill="none" stroke="#777" strokeWidth="1.5"><path d="M1 9v13h12M5 6v12h12M9 3h10v12H9z" /><path d="M14 0v15" /><Plus /></g>,
  eye: <g><path d="M1 12C6 3 17 3 22 12c-5 7-16 7-21 0z" fill="#fff" stroke="#888" strokeWidth="1.5" /><circle cx="12" cy="11" r="5" fill={B} stroke="#555" /><circle cx="12" cy="11" r="2" fill="#222" /><path d="M15 20h8l-4 4z" fill="#555" /></g>,
  epsilon: <g><text x="0" y="15" fontSize="24" fontFamily="DejaVu Serif" fill="#5f3c70">ε</text><path d="M13 23v-7c0-3 9-3 9 0v7" fill="none" stroke="#b5b5b5" strokeWidth="3" /></g>,
  removeBox: <g><path d="M2 2h17v17H2z" fill="#eee" stroke="#888" strokeWidth="1.4" /><rect x="14" y="16" width="10" height="7" rx="2" fill="#e0474c" /><path d="M16 19.5h6" stroke="#fff" strokeWidth="1.5" /></g>,
  duplicate: <g><path d="M1 5v18h16" fill="none" stroke="#777" strokeWidth="2.5" /><path d="M5 2h17v17H5z" fill="#eee" stroke="#777" strokeWidth="1.4" /><path d="M15 15h9v9h-9z" fill="#d8b92c" /></g>,
  glasses: <g fill="none" stroke="#111" strokeWidth="2"><circle cx="6" cy="6" r="4" /><circle cx="18" cy="6" r="4" /><path d="M10 5c1-1 3-1 4 0M2 5L0 1M22 5l2-4" /><Plus /></g>,
  raster: <Checker />,
  vector: <path d={VECTOR} fill="#e3e9f1" stroke="#42566e" strokeWidth="1.5" />,
  vectorOn: <path d={VECTOR} fill="#7fb6e3" stroke="#3b6f9f" strokeWidth="1.5" />,
  folder: <g><path d="M1 2h10l2 3h10v3H1z" fill="#8a8a86" /><path d="M1.500 9.500H9l2-2.500h11.500v15h-21z" fill="#f4f4f3" stroke="#8a8a86" strokeWidth="1.5" /></g>,
  zip: <g><path d="M1.5 1.5h21v21h-21z" fill="#e9e9e6" stroke="#8a8a86" strokeWidth="1.5" /><path d="M9 1v22M15 1v22" stroke="#555" /><path d="M12 2v13" stroke="#444" strokeWidth="4" strokeDasharray="2 1.5" /><circle cx="12" cy="18" r="2" fill="#555" /></g>,
  search: <g fill="none" stroke="#8c8c8c"><circle cx="9.5" cy="9.5" r="7" strokeWidth="2.2" /><path d="M15 15l7 7" strokeWidth="3.5" /></g>,
  pen: <g stroke="#222" fill="none" strokeWidth="1.6"><path d="M3 3c5-3 8 3 11 8l6 9c-2 4-9 4-12-1S0 6 3 3z" fill="#ddd" /><path d="M4 8l7-5M6 12l8-6M8 16l8-6M10 20l9-5M14 6l8-5M18 9l5-3" /></g>,
  lock: <g><path d="M6 11V7c0-8 12-8 12 0v4" fill="none" stroke="#777" strokeWidth="2.5" /><rect x="3" y="10" width="18" height="13" rx="2" fill="#5b5b5b" /></g>,
  crs: <Grid c="#777" />,
  bubble: <g><path d="M12 2c7 0 11 3 11 9 0 4-2 7-5 8l2 5-7-4C5 20 1 17 1 11c0-6 4-9 11-9z" fill="#55585d" /><path d="M6 9h4v4H6zM12 9h6M12 13h6" stroke="#ccc" strokeWidth="1.5" /></g>,
};

const Icon = ({ name, className = "size-6" }) => (
  <svg viewBox="0 0 24 24" className={`shrink-0 overflow-visible ${className}`} fill="none" aria-hidden="true">
    {icons[name]}
  </svg>
);

const Caret = ({ className = "text-[#555]" }) => (
  <svg viewBox="0 0 8 5" className={`h-[5px] w-2 shrink-0 ${className}`} aria-hidden="true">
    <path d="M0 0h8L4 5z" fill="currentColor" />
  </svg>
);

// ===== Toolbars =====
// "|" is a drag handle, "-" a separator, a trailing "v" a drop-down arrow
const row1 = ["newFile", "open", "save", "layout", "tool", "style", "|", "hand", "pan", "zoomIn", "zoomOut", "zoomFull", "zoomSel", "zoomLayer", "zoomNative", "zoomLast", "zoomNext", "newMap", "bookmarkNew", "bookmarks", "refresh", "|", "identify", "action v", "select v", "selectForm v", "deselect", "table", "calc", "gear", "sigma", "measure v", "tips", "annot v"];
const row2 = ["dataSource", "geopackage", "newShape", "newSpatialite", "newMemory", "-", "newVirtual", "|", "pencils", "pencil", "saveEdits", "addPoly", "vertex v", "attrs", "trash", "cut", "copy", "paste", "undo", "redo", "|", "label", "diagram", "-", "labelPin", "labelRed", "-", "gl1", "gl2", "gl3", "gl4", "gl5"];
const row2b = ["db", "|", "metasearch", "|", "python", "|", "help"];
const row3 = ["cad", "move v", "rotate", "simplify", "addRing", "addPart", "fillRing", "delRing", "delPart", "reshape", "offset", "offsetCurve", "splitFeat", "scissors", "scissors", "merge", "align", "rotPoint v", "|", "hist", "histArrow", "hist", "histArrow", "sunUp", "sunDown", "conUp", "conDown"];
const row4 = ["arc v", "circ v", "ellip v", "rect v", "poly v", "|", "osmSearch", "osmEdit"];

const Handle = () => (
  <span className="ml-2 mr-[3px] h-[26px] w-[5px] shrink-0 bg-[radial-gradient(#b5b5b5_40%,transparent_45%)] bg-[size:3px_3px]" />
);

function ToolItem({ item }) {
  if (item === "|") return <Handle />;
  if (item === "-") return <span className="mx-[3px] h-6 w-px shrink-0 bg-[#d0d0d0]" />;
  const [name, arrow] = item.split(" ");
  return (
    <button
      type="button"
      aria-label={name}
      className={`flex h-8 shrink-0 items-center rounded-sm pl-1 ${arrow ? "w-[45px] gap-[6px]" : "w-[33px]"} ${name === "hand" ? "border border-[#a5a5a5] bg-[#dcdcdc] pl-[3px]" : ""}`}
    >
      <Icon name={name} />
      {arrow && <Caret className="text-[#777]" />}
    </button>
  );
}

const Tools = ({ items }) => items.map((item, i) => <ToolItem key={i} item={item} />);

const Toolbar = ({ children }) => (
  <div className="flex h-[39px] shrink-0 items-center border-b border-[#b5b5b5] bg-linear-to-b from-[#fbfbfb] to-[#ededed]">
    <span className="mx-1 h-[26px] w-[5px] shrink-0 bg-[radial-gradient(#b5b5b5_40%,transparent_45%)] bg-[size:3px_3px]" />
    {children}
  </div>
);

// ===== Small controls =====
function Mnemonic({ text }) {
  const m = text.match(/^(.*\()(\w)(\).*)$/);
  if (!m) return text;
  return <>{m[1]}<u className="underline-offset-2">{m[2]}</u>{m[3]}</>;
}

function Check({ checked, onChange, label, className = "size-[14px]" }) {
  return (
    <span className="grid shrink-0 place-items-center">
      <input type="checkbox" aria-label={label} checked={checked} onChange={onChange} className={`col-start-1 row-start-1 appearance-none border border-[#b5b5b5] bg-white ${className}`} />
      {checked && (
        <svg viewBox="0 0 10 10" className="pointer-events-none col-start-1 row-start-1 size-[10px]" aria-hidden="true">
          <path d="M1.5 5L4 8.5 8.5 1" fill="none" stroke="#000" strokeWidth="1.8" />
        </svg>
      )}
    </span>
  );
}

function Spin({ label, value, className, textClass }) {
  return (
    <span className={`flex h-[21px] shrink-0 rounded-[3px] border border-[#a8a8a8] ${className}`}>
      <input aria-label={label} defaultValue={value} className={`min-w-0 flex-1 bg-transparent pl-1 outline-none ${textClass}`} />
      <span className="flex w-[14px] flex-col items-center justify-center gap-1 border-l border-[#c4c4c4] text-[#777]">
        <button type="button" aria-label={`${label} +`} className="rotate-180"><Caret className="block" /></button>
        <button type="button" aria-label={`${label} -`}><Caret className="block" /></button>
      </span>
    </span>
  );
}

// ===== Side docks =====
const sideTools = ["addVector", "addRaster", "addMesh", "addCsv", "addSpatialite", "addVirtual", "addPostgis v", "addWms v", "addWcs", "addWfs v", "newMemory v"];

const tree = [
  { icon: "raster", text: "county10.pdf" },
  { icon: "vector", text: "county10.pdf" },
  { icon: "vector", text: "county10.shp" },
  { icon: "folder", text: "HI_Wetlands.shp", parent: "open" },
  { icon: "vector", text: "HI_Wetlands_Historic_Map_Info.shp" },
  { icon: "vector", text: "HI_Wetlands_Linear.shp" },
  { icon: "vector", text: "HI_Wetlands_Metadata.shp" },
  { icon: "vectorOn", text: "HI_Wetlands_Poly.shp", hover: true },
  { icon: "raster", text: "HI_Wetlands_Shapefile.pdf" },
  { icon: "vector", text: "HI_Wetlands_Shapefile.pdf" },
  { icon: "raster", text: "WetlandsDeepwaterHabitatsClassification.pdf" },
  { icon: "vector", text: "WetlandsDeepwaterHabitatsClassification.pdf" },
  { icon: "zip", text: "county10.shp.zip", parent: "closed" },
  { icon: "zip", text: "HI_Wetlands.shp.zip", parent: "closed" },
];

function DockTitle({ title }) {
  const cls = "flex size-3 items-center justify-center rounded-[3px] border border-[#777]";
  return (
    <div className="flex h-5 items-center gap-[2px] pl-1 pr-[2px]">
      <h2 className="flex-1">{title}</h2>
      <button type="button" aria-label="float" className={cls}>
        <svg viewBox="0 0 8 8" className="size-2"><path d="M2.5 .5h5v5h-5zM.5 2.5h5v5h-5z" fill="none" stroke="#555" /></svg>
      </button>
      <button type="button" aria-label="close" className={cls}>
        <svg viewBox="0 0 8 8" className="size-2"><path d="M1 1l6 6M7 1L1 7" stroke="#444" strokeWidth="2" /></svg>
      </button>
    </div>
  );
}

function DockTools({ items }) {
  return (
    <div className="mb-[2px] flex h-7 items-center pl-2">
      {items.map((item, i) => {
        const [name, arrow] = item.split(" ");
        return (
          <button key={i} type="button" aria-label={name} className={`flex items-center ${arrow ? "w-[37px] gap-[6px]" : "w-[25px]"}`}>
            <Icon name={name} className="size-4" />
            {arrow && <Caret />}
          </button>
        );
      })}
    </div>
  );
}

function BrowserTree() {
  return (
    <div className="grid h-[277px] grid-cols-[1fr_14px] grid-rows-[1fr_14px] border border-[#b5b5b5] bg-white">
      <ul className="overflow-hidden">
        {tree.map((n, i) => (
          <li key={i} className={`flex h-[19px] items-center whitespace-nowrap ${n.parent ? "pl-[86px]" : "pl-[123px]"} ${n.hover ? "bg-[#eee]" : ""}`}>
            {n.parent && <Caret className={n.parent === "open" ? "mr-[10px] text-[#555]" : "mr-[10px] -rotate-90 text-[#555]"} />}
            <Icon name={n.icon} className={n.parent ? "mr-[7px] size-[14px]" : n.icon === "raster" ? "ml-[1px] mr-[7px] size-[14px]" : "mr-[6px] size-4"} />
            <span>{n.text}</span>
          </li>
        ))}
      </ul>
      <div className="flex flex-col items-center border-l border-[#b5b5b5] bg-[#e9e9e9]">
        <button type="button" aria-label="up" className="grid h-[13px] w-full place-items-center border-b border-[#b5b5b5] bg-[#f7f7f7]"><Caret className="rotate-180 text-[#555]" /></button>
        <span className="mt-[37px] h-8 w-full border-y border-[#b5b5b5] bg-[#fafafa]" />
        <button type="button" aria-label="down" className="mt-auto grid h-[14px] w-full place-items-center border-t border-[#b5b5b5] bg-[#f7f7f7]"><Caret className="text-[#555]" /></button>
      </div>
      <div className="flex border-t border-[#b5b5b5] bg-[#e3e3e3]">
        <button type="button" aria-label="left" className="grid w-[14px] shrink-0 place-items-center border-r border-[#b5b5b5] bg-[#f7f7f7]"><Caret className="rotate-90 text-[#555]" /></button>
        <span className="w-[168px] border-r border-[#b5b5b5] bg-[#fafafa]" />
        <button type="button" aria-label="right" className="ml-auto grid w-[14px] shrink-0 place-items-center border-l border-[#b5b5b5] bg-[#f7f7f7]"><Caret className="-rotate-90 text-[#555]" /></button>
      </div>
      <div className="border-l border-t border-[#b5b5b5] bg-[#efefef]" />
    </div>
  );
}

function LayerTree() {
  const [visible, setVisible] = useState({ county10: true, HI_Wetlands_Poly: true });
  const toggle = (id) => setVisible((prev) => ({ ...prev, [id]: !prev[id] }));
  return (
    <ul className="flex-1 border border-[#b5b5b5] bg-white font-bold">
      <li className="flex h-[19px] items-center bg-[#0078d7] pl-[23px] text-white">
        <Check label="county10" checked={visible.county10} onChange={() => toggle("county10")} />
        <span className="ml-[6px] size-4 border border-[#5f8568] bg-[#89b196]" />
        <span className="ml-[3px] flex h-full flex-1 items-center bg-[#1583dc] pl-[3px] underline underline-offset-2">county10</span>
        <span className="mb-1 h-[13px] w-[9px] bg-[#e2e2e2]" />
      </li>
      <li className="flex h-[19px] items-center pl-[23px]">
        <Check label="HI_Wetlands_Poly" checked={visible.HI_Wetlands_Poly} onChange={() => toggle("HI_Wetlands_Poly")} />
        <span className="ml-[6px] size-4 border border-[#7fc3dd] bg-[#a8e0ef]" />
        <span className="ml-[6px]">HI_Wetlands_Poly</span>
      </li>
    </ul>
  );
}

// ===== Context menu =====
const contextMenu = [
  { text: "缩放到图层范围(Z)", icon: "zoomLayer" },
  { text: "缩放到选中的区域(Z)", icon: "zoomLayerOff", disabled: true },
  { text: "在鹰眼图中显示(S)", icon: "glasses" },
  { text: "显示要素数目", check: true },
  { text: "复制图层" },
  { text: "图层重命名(N)" },
  null,
  { text: "创建图层副本(D)", icon: "duplicate" },
  { text: "移除图层(R)...", icon: "removeBox" },
  null,
  { text: "打开属性表(O)", icon: "table" },
  { text: "过滤(F)..." },
  { text: "Change Data Source..." },
  null,
  { text: "设置图层可见比例(S)" },
  { text: "设置坐标参照系", sub: true },
  null,
  { text: "导出", sub: true },
  null,
  { text: "样式", sub: true },
  { text: "属性...(P)", active: true },
];

function ContextMenu() {
  return (
    <div role="menu" className="absolute left-[177px] top-[574px] w-[226px] border border-[#979797] bg-white shadow-[3px_3px_2px_rgba(0,0,0,0.5)]">
      {contextMenu.map((item, i) =>
        item === null ? (
          <div key={i} className="mx-1 mb-px h-px bg-[#bdbdbd]" />
        ) : (
          <button
            key={i}
            type="button"
            role="menuitem"
            disabled={item.disabled}
            className={`flex h-[25px] w-full items-center pl-[7px] text-left ${item.active ? "bg-[#0078d7] text-white" : ""} ${item.disabled ? "text-[#808080]" : ""}`}
          >
            <span className="mr-[6px] flex w-[14px] shrink-0 justify-center">
              {item.icon && <Icon name={item.icon} className="size-[15px]" />}
              {item.check && <span className="size-[14px] border border-[#b5b5b5]" />}
            </span>
            <span className="flex-1"><Mnemonic text={item.text} /></span>
            {item.sub && <Caret className="mr-1 -rotate-90 text-[#555]" />}
          </button>
        )
      )}
    </div>
  );
}

// ===== Map =====
// Coordinates are thirds of a map pixel, relative to each sheet's origin
const sheets = [
  {
    x: 420, y: 190,
    tiles: ["46,240 241,240 240,464 45,463", "428,67 818,70 815,385 425,383"],
    coasts: [
      "178,272 190,266 203,268 215,268 225,278 226,288 215,290 207,300 202,320 203,338 207,350 195,358 175,370 150,374 138,384 128,402 115,425 106,447 95,440 86,442 76,425 72,398 83,385 85,362 100,350 120,330 150,317 170,305 175,290",
      "593,82 610,84 622,92 640,90 645,100 655,90 662,82 690,82 708,92 722,86 728,78 745,92 770,95 785,105 797,118 803,145 812,160 810,180 800,195 793,220 778,235 780,270 782,302 762,308 768,320 745,340 720,362 694,377 665,365 625,362 590,355 578,350 572,357 550,340 522,306 490,298 453,285 440,268 430,250 432,214 450,200 465,185 470,160 480,146 500,137 525,130 548,112 570,98",
    ],
    streams: { coast: 1, cx: 630, cy: 225, rx: 215, ry: 160 },
    reefs: ["184,248 196,248 195,256 186,256 184,248", "216,292 219,305 214,322 206,318 208,306", "85,360 108,332 145,312 174,298", "596,79 620,80 640,96 652,100", "664,80 690,77 706,90"],
    patches: ["105,385 135,380 130,398 115,408 100,395", "85,380 92,380 92,388 85,388", "144,320 155,320 152,332 143,330"],
  },
  {
    x: 910, y: 340,
    tiles: ["230,27 422,27 424,130 520,130 521,232 619,232 619,440 232,441 230,342 134,340 133,236 36,235 38,133 229,131"],
    coasts: [
      "126,170 180,168 225,166 248,165 258,155 268,145 290,122 298,100 320,78 340,62 358,57 375,60 390,82 400,95 405,125 420,140 435,165 442,182 455,182 465,195 473,215 462,228 466,248 475,262 490,270 500,290 515,302 525,295 522,278 520,265 540,268 560,263 555,275 548,280 550,295 570,315 575,335 578,360 595,378 619,393 600,410 580,430 572,428 574,410 545,410 520,420 505,432 485,428 470,412 450,400 435,388 428,385 422,393 388,392 386,386 372,378 366,384 310,395 265,402 255,395 248,375 240,350 232,330 210,315 205,290 185,268 166,248 165,205 145,185",
    ],
    streams: { coast: 0, cx: 370, cy: 235, rx: 240, ry: 185 },
    lakes: ["370,384 366,362 352,352 332,350 328,340 346,338 354,344 352,328 362,326 368,342 376,326 394,330 392,344 380,346 372,354 388,354 372,360", "386,390 420,390 424,374 430,392 448,388 442,396 388,396"],
    reefs: ["126,168 190,158 240,163 254,150 270,136 290,106 318,72 350,55", "376,58 398,78 408,98 408,125 430,150 450,172 472,190 476,220 466,230 474,236 500,270", "470,236 485,262 502,285 518,305", "482,238 500,255 525,262", "498,240 530,252 556,258 570,300 564,310", "572,318 582,352 606,362 618,385 618,402 584,424", "160,236 172,290 190,310 214,322", "245,385 256,408 278,410 310,400 372,396 440,408 484,434 512,430", "168,172 190,162 225,164"],
    deep: ["466,230 474,232 480,262 502,284 516,304 508,302 488,278 466,260"],
  },
  {
    x: 1190, y: 460,
    tiles: [
      "34,25 421,21 424,125 520,124 521,227 425,230 427,314 452,314 454,523 227,524 224,318 328,316 328,231 35,233",
      "515,211 709,207 712,310 1003,305 1006,409 1103,406 1107,615 816,619 815,725 718,726 716,518 683,518 682,485 520,486",
      "520,521 683,519 686,691 523,694",
    ],
    coasts: [
      "84,98 108,102 125,100 138,112 180,116 240,124 268,125 298,130 297,115 307,101 320,110 326,130 340,140 352,145 380,140 415,140 440,134 490,133 495,142 511,148 505,160 485,185 460,208 440,222 415,232 380,238 340,230 300,220 260,206 210,196 170,202 120,208 90,208 45,200 60,165 90,135 92,110",
      "240,355 258,343 300,339 360,345 380,358 400,380 430,405 440,432 432,458 410,480 375,495 318,500 302,485 297,460 298,430 285,405 260,392 243,380",
      "527,665 545,648 570,638 595,618 622,604 640,612 652,628 645,645 640,658 655,662 655,675 640,678 620,682 605,672 580,680 555,686 540,688",
      "595,252 568,256 550,272 535,300 525,340 532,375 560,410 585,432 620,440 655,460 672,445 700,447 715,465 720,500 727,545 722,575 733,605 755,618 785,623 845,615 880,598 920,578 965,582 1000,565 1040,552 1065,525 1082,500 1085,465 1078,445 1060,432 1020,420 985,412 965,390 938,382 910,355 880,325 845,318 805,322 770,342 730,355 702,360 685,335 660,300 640,268 610,256",
    ],
    reefs: ["132,210 180,211 210,207 211,198 212,209 250,212 300,224 350,236 400,238 450,224 480,200", "340,128 350,140 372,138", "514,166 519,166"],
    coastLines: ["298,130 318,135 322,148 335,152 345,167 358,169 363,155 350,143 326,130", "312,128 316,146", "682,578 687,578"],
    patches: ["425,150 470,138 472,165 445,195 430,200 440,175", "195,190 215,186 255,195 240,200", "245,128 262,126 255,140", "350,175 375,180 370,195 355,190", "393,150 402,152 398,165", "865,370 885,362 940,380 965,410 962,430 1000,440 1050,452 1062,480 1045,508 1010,512 1000,490 940,478 905,455 880,440 862,410 872,392", "968,500 1000,505 1040,520 1020,535 1000,552 975,550 980,530 965,520", "605,282 625,290 618,305 608,300", "580,320 600,310 608,360 590,350", "615,320 635,318 625,340"],
    veins: ["895,380 888,440", "905,372 900,450", "915,380 910,448", "925,385 930,450", "935,390 922,440", "880,400 900,412 920,408 940,430", "878,425 900,430 930,448", "965,455 985,450 1000,462", "980,445 960,470", "1015,470 1010,490 1020,505", "1030,460 1032,480 1025,505", "1010,480 1030,474 1055,478", "1045,470 1035,500", "985,510 995,550", "435,160 465,160", "440,150 450,165 460,190", "436,180 460,170"],
    dots: [{ cx: 770, cy: 390, rx: 80, ry: 65, n: 80 }, { cx: 690, cy: 400, rx: 30, ry: 60, n: 25 }, { cx: 355, cy: 420, rx: 30, ry: 40, n: 16 }],
  },
  {
    x: 1510, y: 710,
    tiles: ["118,38 313,35 316,137 511,134 514,237 710,234 713,337 908,334 914,541 1012,538 1015,642 1113,640 1119,848 1020,850 1022,955 727,962 728,1066 532,1070 535,1277 239,1282 236,1180 138,1180 130,755 165,754 165,721 133,721 129,662 31,663 27,456 125,454"],
    coasts: [
      "232,122 210,130 196,155 194,190 203,240 225,280 258,318 257,362 235,378 210,405 205,430 185,465 150,472 120,500 90,532 80,575 90,600 103,638 135,652 150,690 160,720 165,772 192,780 192,815 205,845 222,890 218,950 210,1010 200,1070 208,1110 230,1145 255,1158 295,1167 330,1192 360,1205 385,1225 390,1247 410,1238 438,1200 455,1198 465,1160 487,1135 488,1105 525,1062 565,1048 595,1015 640,998 660,970 690,948 715,942 765,952 820,935 865,905 940,873 975,835 1030,790 1060,755 1068,727 1050,715 1000,695 955,655 928,632 928,590 912,553 880,552 850,562 840,550 840,490 843,455 820,435 790,400 750,365 700,330 640,300 560,262 510,247 465,235 440,242 402,218 370,195 330,175 325,160 300,143 260,128",
    ],
    coastLines: ["856,545 866,548 870,556 878,552"],
    patches: ["686,440 698,422 704,438 745,430 762,442 760,470 772,490 788,504 755,515 748,540 720,557 690,550 680,520 688,490", "335,213 385,222 390,245 378,260 400,290 388,303 350,275 310,245 325,212 328,235 345,245", "720,570 752,574 750,580 722,577", "420,278 426,250 438,242 434,260", "325,172 328,196 322,192"],
    veins: ["345,222 380,240", "340,235 375,250", "350,245 385,232", "360,222 362,252", "345,228 350,248", "400,225 402,250", "375,222 372,250"],
    dots: [{ cx: 640, cy: 490, rx: 45, ry: 90, n: 80 }, { cx: 650, cy: 570, rx: 60, ry: 18, n: 40 }, { cx: 500, cy: 310, rx: 50, ry: 40, n: 22 }, { cx: 740, cy: 760, rx: 70, ry: 50, n: 26 }, { cx: 240, cy: 145, rx: 35, ry: 12, n: 14 }, { cx: 290, cy: 210, rx: 30, ry: 35, n: 14 }, { cx: 430, cy: 455, rx: 14, ry: 18, n: 10 }, { cx: 215, cy: 635, rx: 30, ry: 18, n: 10 }, { cx: 850, cy: 620, rx: 80, ry: 30, n: 16 }, { cx: 500, cy: 850, rx: 240, ry: 220, n: 16 }],
  },
];

function makeRandom(seed) {
  let s = seed * 7919;
  return () => {
    s = (s * 16807) % 2147483647;
    return s / 2147483647;
  };
}

// Breaks every segment into short jittered steps so the shoreline looks surveyed
function roughen(points, seed) {
  const rnd = makeRandom(seed);
  const pts = points.split(" ").map((p) => p.split(",").map(Number));
  const out = [];
  pts.forEach(([x1, y1], i) => {
    const [x2, y2] = pts[(i + 1) % pts.length];
    const n = Math.max(1, Math.round(Math.hypot(x2 - x1, y2 - y1) / 7));
    for (let k = 0; k < n; k++) {
      const t = k / n;
      out.push(`${(x1 + (x2 - x1) * t + (rnd() - 0.5) * 5).toFixed(1)},${(y1 + (y2 - y1) * t + (rnd() - 0.5) * 5).toFixed(1)}`);
    }
  });
  return out.join(" ");
}

// Short wavy valley lines fanning out from the island's centre
function streamPath({ cx, cy, rx, ry }, seed, count, inner) {
  const rnd = makeRandom(seed);
  let d = "";
  for (let i = 0; i < count; i++) {
    const a = rnd() * Math.PI * 2;
    const r = inner + (1 - inner) * Math.sqrt(rnd());
    const x = cx + Math.cos(a) * r * rx;
    const y = cy + Math.sin(a) * r * ry;
    const b = a + (rnd() - 0.5) * 0.9;
    const l = 8 + rnd() * 16;
    d += `M${x.toFixed(1)} ${y.toFixed(1)}q${(Math.cos(b) * l * 0.5 + 2).toFixed(1)} ${(Math.sin(b) * l * 0.5 - 2).toFixed(1)} ${(Math.cos(b) * l).toFixed(1)} ${(Math.sin(b) * l).toFixed(1)}`;
  }
  return d;
}

function dotPath({ cx, cy, rx, ry, n }, seed) {
  const rnd = makeRandom(seed);
  let d = "";
  for (let i = 0; i < n; i++) {
    d += `M${(cx + (rnd() * 2 - 1) * rx).toFixed(1)} ${(cy + (rnd() * 2 - 1) * ry).toFixed(1)}h3`;
  }
  return d;
}

function MapSheet({ sheet, index }) {
  const coasts = sheet.coasts.map((c, i) => roughen(c, 101 + index * 10 + i));
  return (
    <g transform={`translate(${sheet.x} ${sheet.y}) scale(0.33333)`}>
      {sheet.tiles.map((t) => <polygon key={t} points={t} fill="#a8e0ef" stroke="#4a9fd4" strokeWidth="3.5" />)}
      {coasts.map((c, i) => <polygon key={i} points={c} fill="#fae67f" />)}
      {sheet.streams && (
        <>
          <clipPath id={`coast${index}`}><polygon points={coasts[sheet.streams.coast]} /></clipPath>
          <g clipPath={`url(#coast${index})`}>
            <ellipse cx={sheet.streams.cx} cy={sheet.streams.cy} rx={sheet.streams.rx * 0.85} ry={sheet.streams.ry * 0.85} fill="#cfce75" />
            <path d={streamPath(sheet.streams, 7 + index, 900, 0.5)} stroke="#cfce75" strokeWidth="3" fill="none" />
            <path d={streamPath(sheet.streams, 77 + index, 650, 0)} stroke="#fae67f" strokeWidth="3" fill="none" />
          </g>
        </>
      )}
      {sheet.patches?.map((p, i) => <polygon key={p} points={roughen(p, 31 + i)} fill="#e5df7c" stroke="#d3cf74" strokeWidth="2" />)}
      {sheet.veins?.map((p) => <polyline key={p} points={p} stroke="#d3cf76" strokeWidth="3" fill="none" />)}
      {sheet.dots?.map((p, i) => <path key={i} d={dotPath(p, 11 + i)} stroke="#d6d277" strokeWidth="3" />)}
      {sheet.deep?.map((p) => <polygon key={p} points={p} fill="#3f93cc" />)}
      {sheet.reefs?.map((p) => <polyline key={p} points={p} fill="none" stroke="#3f93cc" strokeWidth="3" />)}
      {coasts.map((c, i) => <polygon key={i} points={c} fill="none" stroke="#31403f" strokeWidth="3.5" strokeLinejoin="round" />)}
      {sheet.lakes?.map((p) => <polygon key={p} points={p} fill="#8fcde6" stroke="#31403f" strokeWidth="3.5" />)}
      {sheet.coastLines?.map((p) => <polyline key={p} points={p} fill="none" stroke="#31403f" strokeWidth="4" />)}
    </g>
  );
}

function MapCanvas() {
  return (
    <main className="min-w-0 flex-1 border-l border-t border-b border-[#b5b5b5] bg-white">
      <svg viewBox="399 179 1521 992" preserveAspectRatio="xMinYMin meet" className="size-full" role="img" aria-label="map">
        {sheets.map((s, i) => <MapSheet key={i} sheet={s} index={i} />)}
      </svg>
    </main>
  );
}

// ===== Status bar =====
const mono = "font-['Liberation_Mono','Noto_Sans_CJK_SC',monospace] text-[10px]";

function StatusBar() {
  const [render, setRender] = useState(true);
  return (
    <footer className="relative flex h-7 shrink-0 items-center bg-[#efefef] pl-1 pr-2">
      <label className="flex h-[22px] w-[200px] items-center gap-2 rounded-[3px] border border-[#a8a8a8] bg-white pl-2">
        <Icon name="search" className="size-[13px]" />
        <input aria-label="locator" placeholder="键入以定位(Ctrl+K)" className="min-w-0 flex-1 font-['Liberation_Sans','Noto_Sans_CJK_SC',sans-serif] outline-none placeholder:text-[#777]" />
      </label>
      <div className="ml-auto flex items-center">
        <label htmlFor="coord">坐标</label>
        <input id="coord" defaultValue="340508,2267792" className={`h-[21px] w-[105px] rounded-[3px] border border-[#a8a8a8] bg-white text-center ${mono}`} />
        <button type="button" aria-label="extents" className="ml-[5px] mr-[14px]"><Icon name="pen" className="size-[15px]" /></button>
        <label htmlFor="scale">比例尺</label>
        <span className="flex h-[21px] w-[82px] rounded-[3px] border border-[#a8a8a8] bg-white">
          <input id="scale" defaultValue="1:1512548" className={`min-w-0 flex-1 pl-[3px] ${mono}`} />
          <button type="button" aria-label="scales" className="grid w-[19px] place-items-center border-l border-[#c4c4c4] bg-[#f7f7f7]"><Caret className="text-[#666]" /></button>
        </span>
        <button type="button" aria-label="lock" className="ml-3 mr-2"><Icon name="lock" className="size-[15px]" /></button>
        <span>放大镜</span>
        <Spin label="放大镜" value="100%" className="w-[93px] bg-white" textClass={mono} />
        <span className="ml-[9px] mr-[6px] w-12">旋转角度</span>
        <Spin label="旋转角度" value="0.0°" className="w-[88px] bg-white" textClass={mono} />
        <label className="ml-[6px] flex items-center gap-[6px]">
          <Check label="渲染" checked={render} onChange={() => setRender(!render)} />
          渲染
        </label>
        <button type="button" className={`ml-[18px] flex items-center gap-1 ${mono}`}><Icon name="crs" className="size-[13px]" />EPSG:26904</button>
        <button type="button" aria-label="messages" className="ml-6"><Icon name="bubble" className="size-4" /></button>
      </div>
      <span className="pointer-events-none absolute right-[13px] top-[-2px] font-['Open_Sans',sans-serif] text-[15px] leading-6 text-[#bcbcbc]/60">https://blog.csdn.net/QGISClass</span>
    </footer>
  );
}

// ===== App =====
const menus = ["项目(J)", "编辑(E)", "视图(V)", "图层(L)", "设置(S)", "插件(P)", "矢量(O)", "栅格(R)", "数据库(D)", "网络(W)", "网孔(M)", "处理(C)", "帮助(H)"];

export default function App() {
  return (
    <div className="relative flex h-screen flex-col overflow-hidden bg-[#efefef] font-['Noto_Sans','Noto_Sans_CJK_SC',sans-serif] text-xs leading-4 text-black">
      <nav className="flex h-[22px] shrink-0 items-center gap-px border-b border-[#d0d0d0] pl-[3px]">
        {menus.map((m) => (
          <button key={m} type="button" className="px-[7px]"><Mnemonic text={m} /></button>
        ))}
      </nav>

      <Toolbar><Tools items={row1} /></Toolbar>
      <Toolbar>
        <Tools items={row2} />
        <span className="w-[22px]" />
        <Tools items={["|", ...row2b]} />
        <span className="w-6" />
        <Handle />
      </Toolbar>
      <Toolbar>
        <Tools items={row3} />
        <div className="ml-[409px] flex items-center">
          <Handle />
          <Tools items={["magnet", "snapV", "snapPts"]} />
          <Spin label="容差" value="12" className="w-[83px] bg-[#f0f0f0]" textClass="text-[#888]" />
          <span className="mx-[2px] grid w-[65px] items-center">
            <select aria-label="单位" className="col-start-1 row-start-1 h-[21px] appearance-none rounded-[3px] border border-[#bdbdbd] bg-[#f5f5f5] pl-1 text-[#777]"><option>像素</option></select>
            <Caret className="pointer-events-none col-start-1 row-start-1 mr-2 justify-self-end text-[#a0a0a0]" />
          </span>
          <Tools items={["topo", "inter", "selfSnap v"]} />
        </div>
      </Toolbar>
      <Toolbar><Tools items={row4} /></Toolbar>

      <div className="flex min-h-0 flex-1">
        <aside className="flex w-[52px] shrink-0 flex-col border-r border-[#b5b5b5] bg-linear-to-r from-[#fbfbfb] to-[#ededed]">
          <span className="ml-[19px] mt-1 h-[6px] w-4 shrink-0 bg-[radial-gradient(#b5b5b5_40%,transparent_45%)] bg-[size:3px_3px]" />
          {sideTools.map((item) => {
            const [name, arrow] = item.split(" ");
            return (
              <button key={item} type="button" aria-label={name} className="flex h-8 shrink-0 items-center gap-[6px] pl-2 pt-[2px]">
                <Icon name={name} className="size-6" />
                {arrow && <Caret />}
              </button>
            );
          })}
        </aside>

        <div className="mr-[6px] flex w-[340px] shrink-0 flex-col">
          <section>
            <DockTitle title="浏览" />
            <DockTools items={["addBox", "refresh", "filter", "collapse", "info"]} />
            <BrowserTree />
          </section>
          <span className="mx-auto my-[1px] h-1 w-4 bg-[radial-gradient(#b5b5b5_40%,transparent_45%)] bg-[size:3px_3px]" />
          <section className="flex flex-1 flex-col">
            <DockTitle title="图层" />
            <DockTools items={["brush", "group", "eye", "filter", "epsilon v", "expand", "collapse", "removeBox"]} />
            <LayerTree />
          </section>
        </div>

        <MapCanvas />
      </div>

      <StatusBar />
      <ContextMenu />
    </div>
  );
}
